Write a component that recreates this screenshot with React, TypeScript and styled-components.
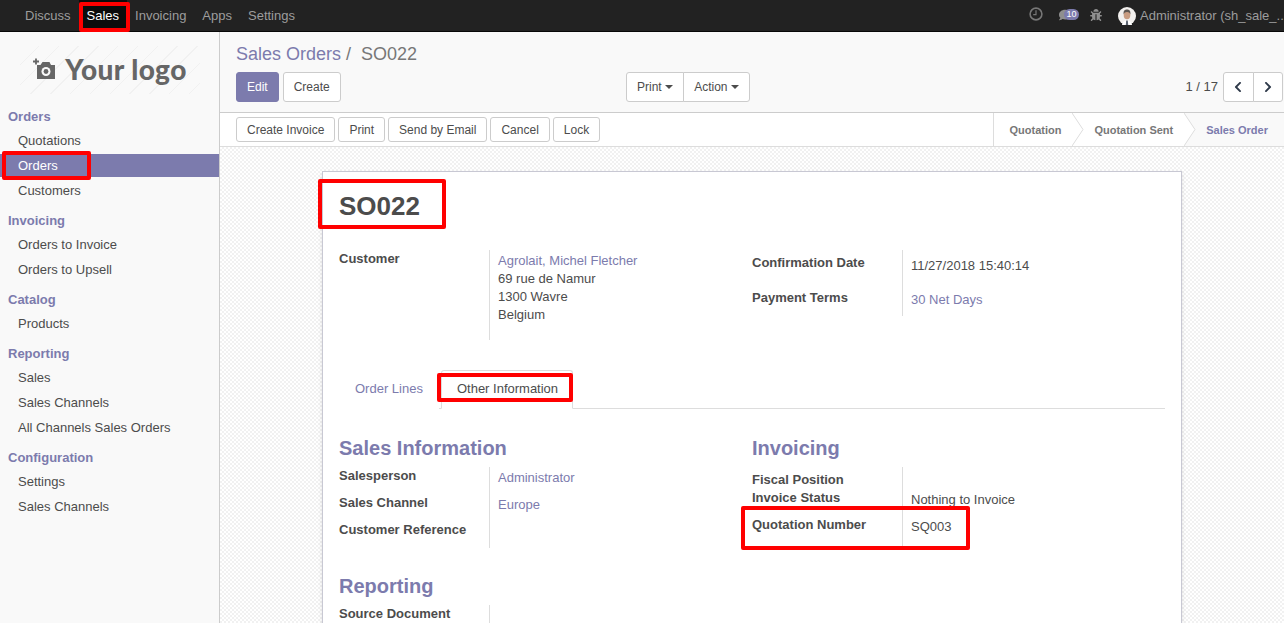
import React from 'react';
import styled, { createGlobalStyle } from 'styled-components';
import { FaBug, FaChevronLeft, FaChevronRight, FaComment } from 'react-icons/fa';

const Global = createGlobalStyle`
  html, body, #root { height: 100%; margin: 0; }
  body {
    font-family: "Liberation Sans", Arial, sans-serif;
    font-size: 13px;
    line-height: 18px;
    color: #4c4c4c;
    overflow: hidden;
  }
  * { box-sizing: border-box; }
`;

const purple = '#7c7bad';

const Page = styled.div`
  position: relative;
  width: 1284px;
  height: 623px;
  overflow: hidden;
  display: flex;
  flex-direction: column;
`;

const Navbar = styled.header`
  height: 32px;
  flex: none;
  background: #222;
  border-bottom: 1px solid #080808;
  display: flex;
  align-items: center;
  justify-content: space-between;
  padding-left: 17px;
`;

const NavMenu = styled.nav`
  display: flex;
  height: 100%;
`;

const NavLink = styled.a<{ $active?: boolean }>`
  padding: 0 8px;
  line-height: 31px;
  color: ${(p) => (p.$active ? '#fff' : '#9d9d9d')};
  background: ${(p) => (p.$active ? '#0c0c0c' : 'transparent')};
`;

const Systray = styled.div`
  display: flex;
  align-items: center;
  width: 255px;
  flex: none;
  color: #9d9d9d;
  white-space: nowrap;
`;

const ClockIcon = styled.svg`
  width: 14px;
  height: 14px;
  margin-right: 16px;
  margin-top: -3px;
  flex: none;
`;

const Messages = styled.div`
  position: relative;
  width: 20px;
  height: 14px;
  margin-right: 11px;
  flex: none;
  color: #8f8f8f;
  font-size: 12px;
  margin-top: -2px;
`;

const Badge = styled.span`
  position: absolute;
  right: 0;
  top: 1px;
  width: 15px;
  height: 11px;
  border-radius: 6px;
  background: ${purple};
  color: #fff;
  font-size: 9px;
  line-height: 11px;
  text-align: center;
`;

const BugIcon = styled(FaBug)`
  color: #8f8f8f;
  font-size: 12px;
  margin-right: 16px;
  margin-top: -2px;
  flex: none;
`;

const Avatar = styled.svg`
  width: 18px;
  height: 18px;
  margin-right: 4px;
  flex: none;
`;

const Body = styled.div`
  flex: 1;
  display: flex;
  min-height: 0;
`;

const Sidebar = styled.aside`
  width: 220px;
  flex: none;
  background: #f9f9f9;
  border-right: 1px solid #ccc;
  padding-top: 14px;
`;

const LogoBox = styled.div`
  width: 180px;
  height: 48px;
  margin: 0 0 0 20px;
  padding-bottom: 3px;
  display: flex;
  align-items: center;
  justify-content: center;
  gap: 8px;
  background: repeating-linear-gradient(
    135deg,
    #f9f9f9 0,
    #f9f9f9 13px,
    #f1f1f1 13px,
    #f1f1f1 14px
  );
`;

const LogoText = styled.span`
  font-family: Lato, "Liberation Sans", sans-serif;
  font-size: 28px;
  font-weight: 900;
  color: #666;
  line-height: 32px;
  letter-spacing: 0.4px;
`;

const Menu = styled.div`
  margin-top: 13px;
`;

const MenuHeader = styled.div`
  height: 19px;
  margin: 0 0 3px;
  padding-left: 8px;
  font-weight: bold;
  color: ${purple};
  line-height: 19px;
`;

const MenuGroup = styled.section`
  margin-bottom: 9px;
`;

const MenuItem = styled.a<{ $active?: boolean }>`
  display: block;
  height: 23px;
  margin-bottom: 2px;
  padding-left: 18px;
  line-height: 23px;
  color: ${(p) => (p.$active ? '#fff' : '#4c4c4c')};
  background: ${(p) => (p.$active ? purple : 'transparent')};
`;

const Main = styled.main`
  flex: 1;
  min-width: 0;
  display: flex;
  flex-direction: column;
`;

const ControlPanel = styled.div`
  height: 81px;
  flex: none;
  background: #f9f9f9;
  border-bottom: 1px solid #ccc;
  padding: 11px 1px 0 16px;
`;

const Breadcrumb = styled.div`
  font-size: 18px;
  line-height: 22px;
  color: #777;
  white-space: pre;
`;

const CrumbLink = styled.a`
  color: ${purple};
`;

const ControlRow = styled.div`
  display: grid;
  grid-template-columns: 390px 1fr auto;
  margin-top: 7px;
`;

const Btn = styled.button<{ $primary?: boolean }>`
  height: 30px;
  padding: 0 10px;
  font: inherit;
  font-size: 12px;
  color: ${(p) => (p.$primary ? '#fff' : '#4c4c4c')};
  background: ${(p) => (p.$primary ? purple : '#fff')};
  border: 1px solid ${(p) => (p.$primary ? purple : '#ccc')};
  border-radius: 3px;
`;

const ButtonRow = styled.div`
  display: flex;
  gap: 4px;
`;

const Joined = styled.div`
  display: flex;
  width: max-content;
  & > button { border-radius: 0; margin-left: -1px; }
  & > button:first-child { border-radius: 3px 0 0 3px; margin-left: 0; }
  & > button:last-child { border-radius: 0 3px 3px 0; }
`;

const Caret = styled.span`
  display: inline-block;
  margin-left: 3.5px;
  vertical-align: 2px;
  border-top: 4px solid #4c4c4c;
  border-left: 4px solid transparent;
  border-right: 4px solid transparent;
`;

const Pager = styled.div`
  display: flex;
  align-items: center;
  gap: 5px;
  font-size: 13px;
`;

const PagerBtn = styled(Btn)`
  width: 30.5px;
  padding: 0;
  display: flex;
  align-items: center;
  justify-content: center;
  color: #2f3a4a;
  font-size: 12px;
`;

const StatusBar = styled.div`
  height: 34px;
  flex: none;
  background: #fff;
  border-bottom: 1px solid #ddd;
  display: flex;
  justify-content: space-between;
  padding-left: 16px;
`;

const ActionButtons = styled.div`
  display: flex;
  gap: 3px;
  align-items: center;
`;

const SmallBtn = styled(Btn)`
  height: 25px;
`;

const Steps = styled.div`
  display: flex;
  height: 100%;
  border-left: 1px solid #ddd;
`;

const Step = styled.div<{ $current?: boolean; $first?: boolean }>`
  position: relative;
  display: flex;
  align-items: center;
  overflow: hidden;
  padding: 0 ${(p) => (p.$current ? '16px' : '11px')} 0 ${(p) => (p.$first ? '15px' : '22px')};
  font-size: 11px;
  font-weight: bold;
  color: ${(p) => (p.$current ? purple : '#777')};
  background: ${(p) => (p.$current ? '#f9f9f9' : '#fff')};
`;

const StepArrow = styled.svg`
  position: absolute;
  left: 0;
  top: 0;
  width: 12px;
  height: 33px;
`;

const Content = styled.div`
  flex: 1;
  min-height: 0;
  overflow: hidden;
  padding-top: 24px;
  background-color: #fff;
  background-image: conic-gradient(#f1f1f1 25%, #fff 0 50%, #f1f1f1 0 75%, #fff 0);
  background-size: 4px 4px;
`;

const Sheet = styled.article`
  width: 860px;
  margin-left: 102px;
  height: 640px;
  background: #fff;
  border: 1px solid #c8c8d3;
  box-shadow: 0 2px 4px rgba(0, 0, 0, 0.12);
  padding: 16px 16px 0;
`;

const Title = styled.h1`
  margin: 0;
  font-size: 26px;
  line-height: 36px;
  font-weight: bold;
  color: #4c4c4c;
`;

const Columns = styled.div<{ $top: number }>`
  display: grid;
  grid-template-columns: 413px 413px;
  margin-top: ${(p) => p.$top}px;
`;

const Field = styled.div<{ $h: number; $labelTop: number; $valueTop: number }>`
  display: grid;
  grid-template-columns: 151px 1fr;
  height: ${(p) => p.$h}px;

  & > b { padding-top: ${(p) => p.$labelTop}px; border-right: 1px solid #ddd; }
  & > span { padding: ${(p) => p.$valueTop}px 0 0 8px; }
`;

const Link = styled.a`
  color: ${purple};
`;

const Tabs = styled.div`
  display: flex;
  height: 39px;
  margin: 30px 0 0;
  padding-left: 0;
  border-bottom: 1px solid #ddd;
`;

const Tab = styled.a<{ $active?: boolean }>`
  height: 39px;
  padding: ${(p) => (p.$active ? '9px 14px 10px 15px' : '9px 15px 10px')};
  margin-left: ${(p) => (p.$active ? '2px' : '0')};
  color: ${(p) => (p.$active ? '#4c4c4c' : purple)};
  background: #fff;
  border: 1px solid ${(p) => (p.$active ? '#ddd' : 'transparent')};
  border-bottom-color: ${(p) => (p.$active ? '#fff' : 'transparent')};
  border-radius: 3px 3px 0 0;
`;

const SectionTitle = styled.h2<{ $top?: number }>`
  margin: ${(p) => p.$top ?? 0}px 0 8px;
  font-size: 20px;
  line-height: 22px;
  font-weight: bold;
  color: ${purple};
`;

const Mark = styled.div<{ $x: number; $y: number; $w: number; $h: number }>`
  position: absolute;
  left: ${(p) => p.$x}px;
  top: ${(p) => p.$y}px;
  width: ${(p) => p.$w}px;
  height: ${(p) => p.$h}px;
  border: 4px solid #f00;
  border-radius: 2px;
  pointer-events: none;
`;

const menus = [
  { title: 'Orders', items: ['Quotations', 'Orders', 'Customers'] },
  { title: 'Invoicing', items: ['Orders to Invoice', 'Orders to Upsell'] },
  { title: 'Catalog', items: ['Products'] },
  { title: 'Reporting', items: ['Sales', 'Sales Channels', 'All Channels Sales Orders'] },
  { title: 'Configuration', items: ['Settings', 'Sales Channels'] },
];

export default function App() {
  return (
    <Page>
      <Global />
      <Navbar>
        <NavMenu>
          <NavLink>Discuss</NavLink>
          <NavLink $active>Sales</NavLink>
          <NavLink>Invoicing</NavLink>
          <NavLink>Apps</NavLink>
          <NavLink>Settings</NavLink>
        </NavMenu>
        <Systray>
          <ClockIcon viewBox="0 0 14 14" fill="none" stroke="#777" strokeWidth="1.6">
            <circle cx="7" cy="7" r="5.9" />
            <path d="M7 3.2V7.6H4.2" strokeWidth="1.2" />
          </ClockIcon>
          <Messages>
            <FaComment />
            <Badge>10</Badge>
          </Messages>
          <BugIcon />
          <Avatar viewBox="0 0 18 18">
            <circle cx="9" cy="9" r="9" fill="#f2f0ee" />
            <path d="M4 18c.5-3.5 2.5-4.5 5-4.5s4.500 1 5 4.500z" fill="#fff" />
            <path d="M8.200 13.500h1.600l.4 4.500H7.800z" fill="#5a6270" />
            <ellipse cx="9" cy="8" rx="3.300" ry="4.300" fill="#c99c80" />
            <path d="M5.600 7.500C5.200 3.500 7 2.600 9 2.600s3.800.9 3.400 4.900c-.4-1.800-1.200-2.600-3.400-2.600s-3 .8-3.400 2.600z" fill="#5e5751" />
          </Avatar>
          Administrator (sh_sale_..
        </Systray>
      </Navbar>
      <Body>
        <Sidebar>
          <LogoBox>
            <svg width="24" height="22" viewBox="0 0 24 22">
              <path d="M0 3.500h6M3 .5v6" stroke="#666" strokeWidth="1.800" fill="none" />
              <path d="M4 7h3.500L9.500 4h7l1.500 3h4v14H4z" fill="#666" />
              <circle cx="13" cy="13.500" r="4.500" fill="#f9f9f9" />
              <circle cx="13" cy="13.500" r="2.400" fill="#666" />
            </svg>
            <LogoText>Your logo</LogoText>
          </LogoBox>
          <Menu>
            {menus.map((m) => (
              <MenuGroup key={m.title}>
                <MenuHeader>{m.title}</MenuHeader>
                {m.items.map((item) => (
                  <MenuItem key={item} $active={m.title === 'Orders' && item === 'Orders'}>
                    {item}
                  </MenuItem>
                ))}
              </MenuGroup>
            ))}
          </Menu>
        </Sidebar>
        <Main>
          <ControlPanel>
            <Breadcrumb>
              <CrumbLink>Sales Orders</CrumbLink> /  SO022
            </Breadcrumb>
            <ControlRow>
              <ButtonRow>
                <Btn $primary>Edit</Btn>
                <Btn>Create</Btn>
              </ButtonRow>
              <Joined>
                <Btn>Print<Caret /></Btn>
                <Btn>Action<Caret /></Btn>
              </Joined>
              <Pager>
                1 / 17
                <Joined>
                  <PagerBtn><FaChevronLeft /></PagerBtn>
                  <PagerBtn><FaChevronRight /></PagerBtn>
                </Joined>
              </Pager>
            </ControlRow>
          </ControlPanel>
          <StatusBar>
            <ActionButtons>
              <SmallBtn>Create Invoice</SmallBtn>
              <SmallBtn>Print</SmallBtn>
              <SmallBtn>Send by Email</SmallBtn>
              <SmallBtn>Cancel</SmallBtn>
              <SmallBtn>Lock</SmallBtn>
            </ActionButtons>
            <Steps>
              <Step $first>Quotation</Step>
              <Step>
                <StepArrow viewBox="0 0 12 33" fill="none" stroke="#ddd"><path d="M0 0l11 16.500L0 33" /></StepArrow>
                Quotation Sent
              </Step>
              <Step $current>
                <StepArrow viewBox="0 0 12 33" fill="#fff" stroke="#ddd"><path d="M0 0l11 16.500L0 33" /></StepArrow>
                Sales Order
              </Step>
            </Steps>
          </StatusBar>
          <Content>
            <Sheet>
              <Title>SO022</Title>
              <Columns $top={26}>
                <div>
                  <Field $h={90} $labelTop={0} $valueTop={2}>
                    <b>Customer</b>
                    <span>
                      <Link>Agrolait, Michel Fletcher</Link><br />
                      69 rue de Namur<br />
                      1300 Wavre<br />
                      Belgium
                    </span>
                  </Field>
                </div>
                <div>
                  <Field $h={35} $labelTop={4} $valueTop={7}>
                    <b>Confirmation Date</b>
                    <span>11/27/2018 15:40:14</span>
                  </Field>
                  <Field $h={31} $labelTop={4} $valueTop={6}>
                    <b>Payment Terms</b>
                    <span><Link>30 Net Days</Link></span>
                  </Field>
                </div>
              </Columns>
              <Tabs>
                <Tab>Order Lines</Tab>
                <Tab $active>Other Information</Tab>
              </Tabs>
              <Columns $top={28}>
                <div>
                  <SectionTitle>Sales Information</SectionTitle>
                  <Field $h={27} $labelTop={0} $valueTop={2}>
                    <b>Salesperson</b>
                    <span><Link>Administrator</Link></span>
                  </Field>
                  <Field $h={27} $labelTop={0} $valueTop={2}>
                    <b>Sales Channel</b>
                    <span><Link>Europe</Link></span>
                  </Field>
                  <Field $h={27} $labelTop={0} $valueTop={2}>
                    <b>Customer Reference</b>
                    <span />
                  </Field>
                </div>
                <div>
                  <SectionTitle>Invoicing</SectionTitle>
                  <Field $h={22} $labelTop={4} $valueTop={0}>
                    <b>Fiscal Position</b>
                    <span />
                  </Field>
                  <Field $h={27} $labelTop={0} $valueTop={2}>
                    <b>Invoice Status</b>
                    <span>Nothing to Invoice</span>
                  </Field>
                  <Field $h={30} $labelTop={0} $valueTop={2}>
                    <b>Quotation Number</b>
                    <span>SQ003</span>
                  </Field>
                </div>
              </Columns>
              <SectionTitle $top={27}>Reporting</SectionTitle>
              <Columns $top={0}>
                <Field $h={30} $labelTop={0} $valueTop={2}>
                  <b>Source Document</b>
                  <span />
                </Field>
              </Columns>
            </Sheet>
          </Content>
        </Main>
      </Body>
      <Mark $x={79} $y={2} $w={51} $h={30} />
      <Mark $x={2} $y={151} $w={89} $h={29} />
      <Mark $x={318} $y={179} $w={128} $h={50} />
      <Mark $x={437} $y={373} $w={136} $h={29} />
      <Mark $x={741} $y={506} $w={229} $h={44} />
    </Page>
  );
}
